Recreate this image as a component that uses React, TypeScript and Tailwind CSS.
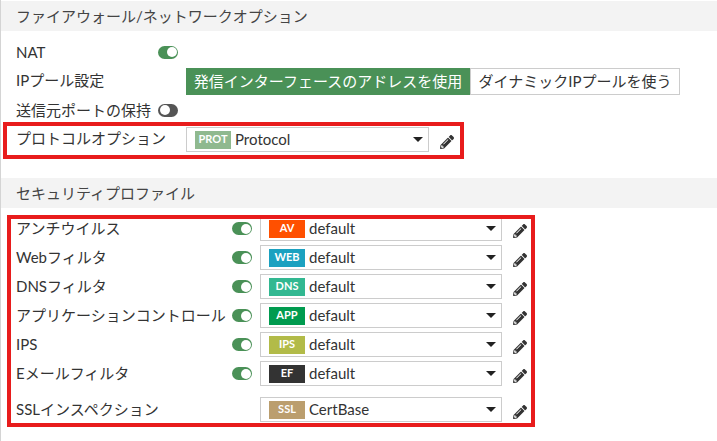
import React from 'react';
import { FaPencilAlt } from 'react-icons/fa';

const font = { fontFamily: 'Lato, "Noto Sans CJK JP", sans-serif' };

const Toggle = ({ on }: { on: boolean }) => (
  <span
    className={`flex h-[13px] w-[20px] shrink-0 items-center rounded-full p-[1.5px] ${
      on ? 'justify-end bg-[#4a9157]' : 'justify-start bg-[#555555]'
    }`}
  >
    <span className="h-[10px] w-[10px] rounded-full bg-white" />
  </span>
);

const Select = ({ tag, tagClass, value, width }: { tag: string; tagClass: string; value: string; width: string }) => (
  <div className={`flex h-[25px] shrink-0 items-center border border-[#cccccc] bg-white pl-[8px] pr-[5px] ${width}`}>
    <span className={`flex h-[18px] w-[36px] shrink-0 items-center justify-center text-[11px] font-bold text-white ${tagClass}`}>
      {tag}
    </span>
    <span className="ml-[4px] flex-1 text-[15px] text-[#333333]">{value}</span>
    <span className="h-0 w-0 border-x-[5px] border-t-[5px] border-x-transparent border-t-[#222222]" />
  </div>
);

const Pencil = () => <FaPencilAlt className="ml-[11px] shrink-0 translate-y-[2px] text-[#333333]" size={14} />;

const SectionHeader = ({ title }: { title: string }) => (
  <div className="flex h-[30px] items-center bg-[#f3f3f3] pl-[15px] text-[15px] text-[#444444]">{title}</div>
);

const rows = [
  { label: 'アンチウイルス', tag: 'AV', tagClass: 'bg-[#ff5000]' },
  { label: 'Webフィルタ', tag: 'WEB', tagClass: 'bg-[#1ba1c0]' },
  { label: 'DNSフィルタ', tag: 'DNS', tagClass: 'bg-[#32b891]' },
  { label: 'アプリケーションコントロール', tag: 'APP', tagClass: 'bg-[#009b4f]' },
  { label: 'IPS', tag: 'IPS', tagClass: 'bg-[#b2bb48]' },
  { label: 'Eメールフィルタ', tag: 'EF', tagClass: 'bg-[#333333]' },
];

export default function App() {
  return (
    <div className="relative h-[441px] w-[717px] overflow-hidden border-l border-[#d4d4d4] bg-white pt-px text-[#333333]" style={font}>
      <SectionHeader title="ファイアウォール/ネットワークオプション" />

      <div className="pl-[15px] pt-[10px] text-[15px]">
        <div className="flex h-[22px] items-center">
          <span className="w-[142px]">NAT</span>
          <Toggle on />
        </div>
        <div className="mt-[5px] flex h-[27px] items-center">
          <span className="w-[170px] -translate-y-px">IPプール設定</span>
          <span className="flex h-[27px] w-[284px] items-center justify-center bg-[#4a9157] text-white">発信インターフェースのアドレスを使用</span>
          <span className="flex h-[27px] w-[210px] items-center justify-center border border-[#cccccc] text-[#333333]">ダイナミックIPプールを使う</span>
        </div>
        <div className="mt-[4px] flex h-[22px] items-center">
          <span className="w-[142px] whitespace-nowrap">送信元ポートの保持</span>
          <Toggle on={false} />
        </div>
        <div className="mt-[6px] flex h-[25px] items-center">
          <span className="w-[170px] -translate-y-px">プロトコルオプション</span>
          <Select tag="PROT" tagClass="bg-[#8fb98f]" value="Protocol" width="w-[243px]" />
          <Pencil />
        </div>
      </div>

      <div className="mt-[26px]">
        <SectionHeader title="セキュリティプロファイル" />
      </div>

      <div className="pl-[15px] pt-[8px] text-[15px]">
        <div className="flex flex-col gap-[4px]">
          {rows.map((row) => (
            <div key={row.tag} className="flex h-[25px] items-center">
              <span className="w-[216px] whitespace-nowrap">{row.label}</span>
              <Toggle on />
              <span className="w-[8px] shrink-0" />
              <Select tag={row.tag} tagClass={row.tagClass} value="default" width="w-[242px]" />
              <Pencil />
            </div>
          ))}
        </div>
        <div className="mt-[11px] flex h-[25px] items-center">
          <span className="w-[244px]">SSLインスペクション</span>
          <Select tag="SSL" tagClass="bg-[#bb9e6e]" value="CertBase" width="w-[242px]" />
          <Pencil />
        </div>
      </div>

      {/* red annotation boxes */}
      <div className="absolute left-[2px] top-[122px] h-[37px] w-[461px] border-[4px] border-[#e81c1c]" />
      <div className="absolute left-[6px] top-[215px] h-[212px] w-[528px] border-[4px] border-[#e81c1c]" />
    </div>
  );
}
